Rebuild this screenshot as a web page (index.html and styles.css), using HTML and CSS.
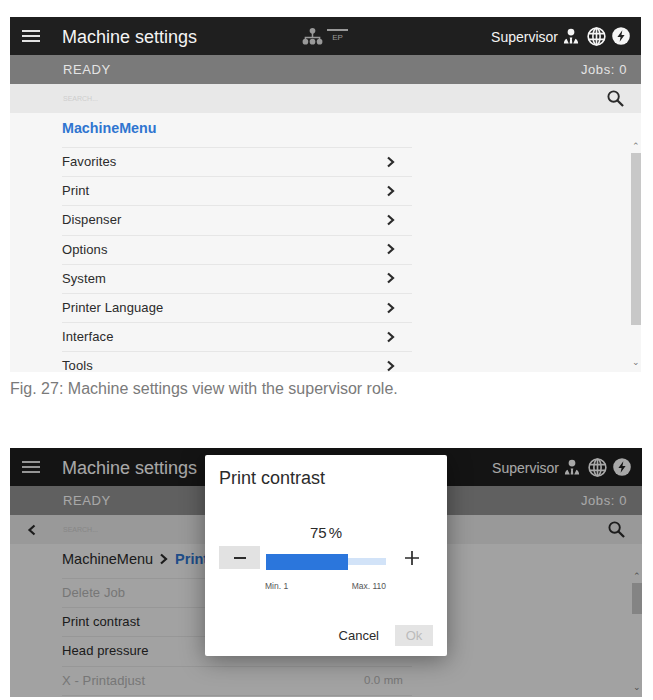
FILE: index.html
```html
<!DOCTYPE html>
<html>
	<head>
		<meta name="viewport" content="width=device-width, initial-scale=1" />
		<link rel="stylesheet" href="styles.css">
	</head>

	<body>
		<svg class="defs" width="0" height="0">
			<symbol id="i-menu" viewBox="0 0 20 14"><path d="M1 2h18M1 7h18M1 12h18" stroke="currentColor" stroke-width="2" fill="none"/></symbol>
			<symbol id="i-tree" viewBox="0 0 22 18"><circle cx="11" cy="3" r="3" fill="currentColor"/><path d="M11 5v5M3.500 13v-3h15v3" stroke="currentColor" stroke-width="1.600" fill="none"/><circle cx="3.500" cy="14.500" r="3" fill="currentColor"/><circle cx="11" cy="14.500" r="3" fill="currentColor"/><circle cx="18.500" cy="14.500" r="3" fill="currentColor"/></symbol>
			<symbol id="i-user" viewBox="0 0 18 18"><circle cx="9" cy="4" r="3.800" fill="currentColor"/><path d="M1 17c0-2.500 1-4.500 3-5.500l2.500 5.500zM17 17c0-2.500-1-4.500-3-5.500l-2.500 5.500zM7.500 10h3L10 12l.5 5h-3l.5-5z" fill="currentColor"/></symbol>
			<symbol id="i-globe" viewBox="0 0 20 20"><g fill="none" stroke="currentColor" stroke-width="1.700"><circle cx="10" cy="10" r="8.800"/><ellipse cx="10" cy="10" rx="3.800" ry="8.800"/><path d="M10 1v18M1.500 7h17M1.500 13h17"/></g></symbol>
			<symbol id="i-power" viewBox="0 0 20 20"><circle cx="10" cy="10" r="9.800" fill="currentColor"/><path d="M11.500 3.500 6 11h3.500l-1 5.500L14 9h-3.500z" fill="#1f1f1f"/></symbol>
			<symbol id="i-search" viewBox="0 0 18 18"><circle cx="7" cy="7" r="5.500" fill="none" stroke="currentColor" stroke-width="2"/><path d="m10.800 10.800 6.200 6.200" stroke="currentColor" stroke-width="2.400"/></symbol>
			<symbol id="i-chevron" viewBox="0 0 10 12"><path d="m2 1.500 5 4.500-5 4.500" fill="none" stroke="currentColor" stroke-width="2.200"/></symbol>
			<symbol id="i-back" viewBox="0 0 10 12"><path d="M7.500 1.500 2.500 6l5 4.500" fill="none" stroke="currentColor" stroke-width="2.200"/></symbol>
			<symbol id="i-minus" viewBox="0 0 14 14"><path d="M1 7h12" stroke="currentColor" stroke-width="2"/></symbol>
			<symbol id="i-plus" viewBox="0 0 14 14"><path d="M0 7h14M7 0v14" stroke="currentColor" stroke-width="1.700"/></symbol>
		</svg>

		<div class="screen screen-first">
			<div class="topbar">
				<svg class="ic-menu"><use href="#i-menu"/></svg>
				<span class="app-title">Machine settings</span>
				<div class="conn">
					<svg class="ic-tree"><use href="#i-tree"/></svg>
					<span class="ep">EP</span>
				</div>
				<div class="top-right">
					<span class="role">Supervisor</span>
					<svg class="ic-user"><use href="#i-user"/></svg>
					<svg class="ic-globe"><use href="#i-globe"/></svg>
					<svg class="ic-power"><use href="#i-power"/></svg>
				</div>
			</div>
			<div class="status"><span>READY</span><span>Jobs: 0</span></div>
			<div class="search">
				<span class="search-text">SEARCH...</span>
				<svg class="ic-search"><use href="#i-search"/></svg>
			</div>
			<div class="content">
				<div class="list">
					<div class="crumb"><span class="link">MachineMenu</span></div>
					<div class="row"><span>Favorites</span><svg class="ic-chevron"><use href="#i-chevron"/></svg></div>
					<div class="row"><span>Print</span><svg class="ic-chevron"><use href="#i-chevron"/></svg></div>
					<div class="row"><span>Dispenser</span><svg class="ic-chevron"><use href="#i-chevron"/></svg></div>
					<div class="row"><span>Options</span><svg class="ic-chevron"><use href="#i-chevron"/></svg></div>
					<div class="row"><span>System</span><svg class="ic-chevron"><use href="#i-chevron"/></svg></div>
					<div class="row"><span>Printer Language</span><svg class="ic-chevron"><use href="#i-chevron"/></svg></div>
					<div class="row"><span>Interface</span><svg class="ic-chevron"><use href="#i-chevron"/></svg></div>
					<div class="row"><span>Tools</span><svg class="ic-chevron"><use href="#i-chevron"/></svg></div>
				</div>
				<div class="scroll">
					<span class="arrow">&#8963;</span>
					<div class="thumb thumb-long"></div>
					<span class="arrow arrow-down">&#8964;</span>
				</div>
			</div>
		</div>

		<p class="caption">Fig. 27: Machine settings view with the supervisor role.</p>

		<div class="screen screen-second">
			<div class="topbar">
				<svg class="ic-menu"><use href="#i-menu"/></svg>
				<span class="app-title">Machine settings</span>
				<div class="top-right">
					<span class="role">Supervisor</span>
					<svg class="ic-user"><use href="#i-user"/></svg>
					<svg class="ic-globe"><use href="#i-globe"/></svg>
					<svg class="ic-power"><use href="#i-power"/></svg>
				</div>
			</div>
			<div class="status"><span>READY</span><span>Jobs: 0</span></div>
			<div class="search search-back">
				<svg class="ic-back"><use href="#i-back"/></svg>
				<span class="search-text">SEARCH...</span>
				<svg class="ic-search"><use href="#i-search"/></svg>
			</div>
			<div class="content">
				<div class="list">
					<div class="crumb crumb-path"><span>MachineMenu</span><svg class="ic-chevron"><use href="#i-chevron"/></svg><span class="link">Print</span></div>
					<div class="row row-off"><span>Delete Job</span></div>
					<div class="row"><span>Print contrast</span></div>
					<div class="row"><span>Head pressure</span></div>
					<div class="row row-off"><span>X - Printadjust</span><span class="value">0.0 mm</span></div>
				</div>
				<div class="scroll">
					<span class="arrow">&#8963;</span>
					<div class="thumb thumb-short"></div>
					<span class="arrow arrow-down">&#8964;</span>
				</div>
			</div>
			<div class="scrim"></div>
			<div class="dialog">
				<h2>Print contrast</h2>
				<div class="percent">75 %</div>
				<div class="slider">
					<div class="step"><svg class="ic-minus"><use href="#i-minus"/></svg></div>
					<div class="track"><div class="fill" style="width: 68%"></div></div>
					<svg class="ic-plus"><use href="#i-plus"/></svg>
				</div>
				<div class="limits"><span>Min. 1</span><span>Max. 110</span></div>
				<div class="actions">
					<span class="cancel">Cancel</span>
					<span class="ok">Ok</span>
				</div>
			</div>
		</div>
	</body>
</html>
```

FILE: styles.css
```css
* { box-sizing: border-box; }

body {
	font-family: "Liberation Sans", Arial, sans-serif;
	margin: 0;
	padding: 17px 12px 0 10px;
	background-color: #fff;
	color: #2b2b2b;
}

.defs { position: absolute; }

svg { display: block; flex: none; }

.screen {
	position: relative;
	overflow: hidden;
	display: flex;
	flex-direction: column;
	background-color: #f6f6f6;
}

.screen-first { height: 355px; }
.screen-second { height: 249px; margin-right: -1px; }

.topbar {
	height: 38px;
	flex: none;
	display: flex;
	align-items: center;
	padding-left: 11px;
	padding-right: 11px;
	background-color: #1f1f1f;
	color: #f4f4f4;
}

.screen-second .topbar { color: #fff; }

.ic-menu { width: 20px; height: 14px; margin-right: 21px; color: #e2e2e2; }
.app-title { font-size: 18px; width: 240px; padding-top: 2px; }

.conn { display: flex; align-items: center; gap: 4px; color: #999; }
.ic-tree { width: 21px; height: 17px; }
.ep { width: 21px; font-size: 8px; text-align: center; border-top: 2px solid #999; padding-top: 2px; margin-bottom: 1px; }

.top-right { margin-left: auto; display: flex; align-items: center; }
.role { font-size: 14px; margin-right: 5px; padding-top: 1px; }
.ic-user { width: 16px; height: 17px; margin-right: 8px; }
.ic-globe { width: 19px; height: 19px; margin-right: 6px; }
.ic-power { width: 18px; height: 18px; }

.status {
	height: 29px;
	flex: none;
	display: flex;
	justify-content: space-between;
	align-items: center;
	padding: 0 15px 0 53px;
	background-color: #7a7a7a;
	color: #e4e4e4;
	font-size: 13px;
	letter-spacing: 0.6px;
}

.screen-first .status { padding-right: 14px; }
.screen-second .status { background-color: #929292; color: #fff; }

.search {
	height: 29px;
	flex: none;
	display: flex;
	align-items: center;
	padding: 0 17px 0 53px;
	background-color: #e8e8e8;
}

.search-back { padding-left: 17px; }
.ic-back { width: 10px; height: 12px; margin-right: 26px; }
.search-text { font-size: 7px; color: #cecece; }
.ic-search { width: 17px; height: 17px; margin-left: auto; }

.content {
	flex: 1;
	display: flex;
	justify-content: space-between;
	min-height: 0;
}

.list { width: 350px; margin-left: 52px; flex: none; }

.crumb {
	height: 35px;
	display: flex;
	align-items: center;
	padding-bottom: 4px;
	font-size: 14.300px;
	font-weight: bold;
	border-bottom: 1px solid #e6e6e6;
}

.crumb-path { font-size: 14.500px; font-weight: normal; gap: 6px; padding-bottom: 4px; }
.crumb-path .link { font-weight: bold; }
.crumb-path .ic-chevron { width: 10px; height: 12px; }

.link { color: #2f75d0; }

.row {
	height: 29.200px;
	flex: none;
	display: flex;
	justify-content: space-between;
	align-items: center;
	padding-right: 16px;
	padding-bottom: 1px;
	font-size: 13px;
	letter-spacing: 0.1px;
	border-bottom: 1px solid #e6e6e6;
}

.row-off { color: #b4b4b4; }
.value { margin-right: -7px; font-size: 11.500px; }
.ic-chevron { width: 10px; height: 12px; color: #2b2b2b; }

.scroll {
	width: 10px;
	display: flex;
	flex-direction: column;
	align-items: center;
	padding-top: 29px;
	color: #777;
}

.screen-second .scroll { padding-top: 28px; }

.arrow { height: 11px; font-size: 9px; line-height: 9px; }
.arrow-down { margin-top: auto; margin-bottom: 3px; }
.thumb { width: 10px; flex: none; background-color: #c8c8c8; }
.thumb-long { height: 172px; }
.thumb-short { height: 31px; }

.scrim {
	position: absolute;
	top: 0;
	left: 0;
	right: 0;
	bottom: 0;
	background-color: rgba(0, 0, 0, 0.34);
}

.dialog {
	position: absolute;
	left: 195px;
	top: 7px;
	width: 242px;
	height: 201px;
	padding: 13px 14px 0;
	display: flex;
	flex-direction: column;
	background-color: #fff;
	border-radius: 2px;
	box-shadow: 0px 4px 24px rgba(0, 0, 0, 0.4);
}

.dialog h2 { margin: 0; font-size: 18px; font-weight: normal; }

.percent { margin-top: 35px; text-align: center; font-size: 15px; word-spacing: -2px; }

.slider { display: flex; align-items: flex-start; margin-top: 5px; }

.step {
	width: 41px;
	height: 23px;
	display: flex;
	justify-content: center;
	align-items: center;
	background-color: #e2e2e2;
}

.ic-minus { width: 14px; height: 14px; }

.track { width: 120px; height: 7px; margin-left: 6px; margin-top: 12px; background-color: #d2e3f8; }
.fill { height: 16px; margin-top: -4px; background-color: #2b76dc; }

.ic-plus { width: 14px; height: 14px; margin-left: 19px; margin-top: 5px; }

.limits {
	display: flex;
	justify-content: space-between;
	margin-top: 12px;
	padding: 0 47px 0 46px;
	font-size: 8.500px;
	color: #555;
}

.actions {
	margin-top: auto;
	margin-bottom: 10px;
	display: flex;
	justify-content: flex-end;
	align-items: center;
	gap: 16px;
	font-size: 13px;
}

.ok {
	width: 38px;
	height: 21px;
	line-height: 21px;
	text-align: center;
	background-color: #e4e4e4;
	color: #bbb;
}

.caption {
	margin: 8px 0 50px;
	font-size: 16px;
	line-height: 18px;
	color: #7a7a7a;
}
```
